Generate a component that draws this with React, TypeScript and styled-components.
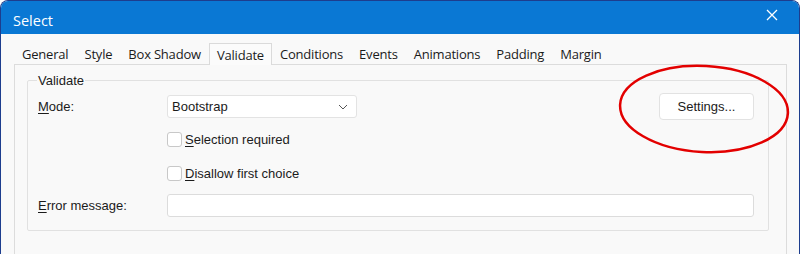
import React from 'react'
import styled, { createGlobalStyle } from 'styled-components'

const GlobalStyle = createGlobalStyle`
  html, body {
    margin: 0;
    padding: 0;
    overflow: hidden;
    background: #ffffff;
  }
`

const Window = styled.div`
  position: relative;
  width: 800px;
  height: 254px;
  box-sizing: border-box;
  border: 1px solid #1d3d8e;
  border-bottom: none;
  border-radius: 8px 8px 0 0;
  overflow: hidden;
  background: #f9f9f9;
  display: flex;
  flex-direction: column;
`

const TitleBar = styled.div`
  height: 33px;
  flex: none;
  box-sizing: border-box;
  background: #0a78d4;
  display: flex;
  align-items: flex-start;
  justify-content: space-between;
  padding: 10px 21px 0 12px;
  color: #ffffff;
  font-family: 'Open Sans', 'Noto Sans', sans-serif;
  font-size: 14.5px;
`

const Close = styled.svg`
  width: 12px;
  height: 12px;
  margin-top: -2px;
`

const Tabs = styled.div`
  display: flex;
  margin-top: 9px;
  padding-left: 13px;
  height: 21px;
  position: relative;
  z-index: 1;
`

const Tab = styled.div<{ $active?: boolean }>`
  padding: 0 7px;
  box-sizing: border-box;
  height: ${({ $active }) => ($active ? '22px' : '21px')};
  display: flex;
  align-items: center;
  font-family: 'Open Sans', 'Noto Sans', sans-serif;
  font-size: 13px;
  letter-spacing: -0.2px;
  color: #1b1b1b;
  background: ${({ $active }) => ($active ? '#fbfbfb' : 'transparent')};
  border: 1px solid ${({ $active }) => ($active ? '#dadada' : 'transparent')};
  border-bottom: none;
`

const Panel = styled.div`
  flex: 1;
  margin: 0 12px 0 13px;
  border: 1px solid #dcdcdc;
  border-bottom: none;
  background: #f9f9f9;
  padding: 8px 17px 0 12px;
`

const Group = styled.fieldset`
  margin: 0;
  padding: 5px 14px 7px 10px;
  border: 1px solid #e1e1e1;
  border-radius: 2px;
  display: grid;
  grid-template-columns: 129px 1fr auto;
  grid-template-rows: 27px 39px 29px 35px;
  align-items: center;
  font-family: 'Liberation Sans', Arial, sans-serif;
  font-size: 13px;
  color: #1b1b1b;
`

const Legend = styled.legend`
  padding: 0 1px;
  margin-left: -1px;
  font-family: 'Liberation Sans', Arial, sans-serif;
  font-size: 13px;
  color: #1b1b1b;
`

const Label = styled.div`
  grid-column: 1;
`

const Key = styled.span`
  text-decoration: underline;
  text-underline-offset: 2px;
`

const SelectBox = styled.div`
  width: 190px;
  height: 23px;
  box-sizing: border-box;
  background: #ffffff;
  border: 1px solid #e3e3e3;
  border-radius: 3px;
  display: flex;
  align-items: center;
  justify-content: space-between;
  padding: 0 8px 0 4px;
`

const Chevron = styled.svg`
  width: 10px;
  height: 6px;
`

const Button = styled.button`
  grid-column: 3;
  width: 95px;
  height: 27px;
  background: #ffffff;
  border: 1px solid #e2e2e2;
  border-radius: 4px;
  font-family: 'Liberation Sans', Arial, sans-serif;
  font-size: 13px;
  color: #1b1b1b;
  padding: 0;
`

const Check = styled.label`
  grid-column: 2 / span 2;
  display: flex;
  align-items: center;
  gap: 3px;
  height: 23px;
`

const Box = styled.span`
  width: 15px;
  height: 15px;
  box-sizing: border-box;
  border: 1px solid #c8c8c8;
  border-radius: 3px;
  background: #ffffff;
`

const TextInput = styled.div`
  grid-column: 2 / span 2;
  height: 23px;
  box-sizing: border-box;
  background: #ffffff;
  border: 1px solid #dcdcdc;
  border-radius: 3px;
`

const Highlight = styled.svg`
  position: absolute;
  left: 614px;
  top: 62px;
  width: 178px;
  height: 94px;
  pointer-events: none;
`

const tabs = ['General', 'Style', 'Box Shadow', 'Validate', 'Conditions', 'Events', 'Animations', 'Padding', 'Margin']

export default function App() {
  return (
    <>
      <GlobalStyle />
      <Window>
        <TitleBar>
          <span>Select</span>
          <Close viewBox="0 0 12 12">
            <path d="M1 1 L11 11 M11 1 L1 11" stroke="#ffffff" strokeWidth="1.3" fill="none" />
          </Close>
        </TitleBar>

        <Tabs>
          {tabs.map((t) => (
            <Tab key={t} $active={t === 'Validate'}>
              {t}
            </Tab>
          ))}
        </Tabs>

        <Panel>
          <Group>
            <Legend>Validate</Legend>

            <Label>
              <Key>M</Key>ode:
            </Label>
            <SelectBox>
              <span>Bootstrap</span>
              <Chevron viewBox="0 0 10 6">
                <path d="M1 1 L5 5 L9 1" stroke="#555555" strokeWidth="1" fill="none" />
              </Chevron>
            </SelectBox>
            <Button>Settings...</Button>

            <Check>
              <Box />
              <span>
                <Key>S</Key>election required
              </span>
            </Check>

            <Check>
              <Box />
              <span>
                <Key>D</Key>isallow first choice
              </span>
            </Check>

            <Label>
              <Key>E</Key>rror message:
            </Label>
            <TextInput />
          </Group>
        </Panel>

        <Highlight viewBox="0 0 178 94">
          <ellipse cx="89" cy="46" rx="84" ry="43" transform="rotate(3 89 46)" stroke="#e30000" strokeWidth="2.5" fill="none" />
        </Highlight>
      </Window>
    </>
  )
}
